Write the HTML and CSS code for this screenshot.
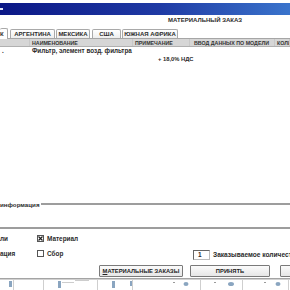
FILE: index.html
```html
<!DOCTYPE html>
<html lang="ru">
<head>
    <meta charset="UTF-8">
    <meta name="viewport" content="width=device-width, initial-scale=1.0">
    <title>Материальный заказ</title>
    <link rel="stylesheet" href="styles.css">
</head>
<body>
    <div class="window">
        <!-- Barra de título -->
        <div class="titlebar"><span class="sysicon"></span></div>
        <div class="caption">МАТЕРИАЛЬНЫЙ ЗАКАЗ</div>

        <!-- Pestañas de país -->
        <div class="tabs">
            <div class="tab active t0">К</div>
            <div class="tab t1">АРГЕНТИНА</div>
            <div class="tab t2">МЕКСИКА</div>
            <div class="tab t3">США</div>
            <div class="tab t4">ЮЖНАЯ АФРИКА</div>
        </div>

        <!-- Tabla de materiales -->
        <div class="grid">
            <div class="grid-row head">
                <span class="c1"></span>
                <span class="c2">НАИМЕНОВАНИЕ</span>
                <span class="c3">ПРИМЕЧАНИЕ</span>
                <span class="c4">ВВОД ДАННЫХ ПО МОДЕЛИ</span>
                <span class="c5">КОЛИ</span>
            </div>
            <div class="grid-row item">
                <span class="c1">.</span>
                <span class="c2">Фильтр, элемент возд. фильтра</span>
                <span class="c3"></span>
                <span class="c4"></span>
                <span class="c5"></span>
            </div>
            <div class="grid-row item">
                <span class="c1"></span>
                <span class="c2"></span>
                <span class="c3 tax">+ 18,0% НДС</span>
                <span class="c4"></span>
                <span class="c5"></span>
            </div>
        </div>

        <div class="group">
            <div class="group-title"><span>информация</span></div>
        </div>

        <div class="options">
            <span class="opt-label">ли</span>
            <label class="check"><span class="box checked"><svg width="7" height="7" viewBox="0 0 7 7"><path d="M1.5 1.5 L5.5 5.5 M5.5 1.5 L1.5 5.5" stroke="#222" stroke-width="1.2"/></svg></span>Материал</label>
            <span></span>
            <span class="opt-label">ация</span>
            <label class="check"><span class="box"></span>Сбор</label>
            <div class="qty"><span class="qty-input">1</span><span class="qty-label">Заказываемое количест</span></div>
        </div>

        <div class="buttons">
            <button class="btn b1"><u>М</u>АТЕРИАЛЬНЫЕ ЗАКАЗЫ</button>
            <button class="btn b2">ПРИНЯТЬ</button>
            <button class="btn b3"></button>
        </div>

        <!-- Vista previa de diagramas -->
        <div class="preview">
            <svg width="290" height="13" viewBox="0 0 290 13">
                <rect x="0" y="0" width="290" height="1.5" fill="#a4a4a4"/>
                <g stroke="#cfcfcf" stroke-width="1">
                    <line x1="13.5" y1="2" x2="13.5" y2="13"/>
                    <line x1="43.5" y1="2" x2="43.5" y2="13"/>
                    <line x1="97.5" y1="2" x2="97.5" y2="13"/>
                    <line x1="132.5" y1="2" x2="132.5" y2="13"/>
                    <line x1="200.5" y1="2" x2="200.5" y2="13"/>
                    <line x1="242.5" y1="2" x2="242.5" y2="13"/>
                    <line x1="288.5" y1="2" x2="288.5" y2="13"/>
                </g>
                <g fill="#8aa5c0">
                    <rect x="9" y="3" width="3" height="6"/>
                    <rect x="58" y="3" width="3" height="7"/>
                    <rect x="112" y="3" width="3" height="7"/>
                    <rect x="130" y="3" width="2" height="5"/>
                    <ellipse cx="186" cy="6" rx="2.5" ry="2"/>
                    <ellipse cx="231" cy="6" rx="3" ry="2"/>
                    <ellipse cx="278" cy="6" rx="2.5" ry="2"/>
                </g>
                <g fill="#9a9a9a">
                    <rect x="173" y="4" width="2" height="1"/>
                    <rect x="214" y="4" width="2" height="1"/>
                    <rect x="264" y="4" width="2" height="1"/>
                    <rect x="62" y="4" width="12" height="0.5"/>
                    <rect x="75" y="2.5" width="14" height="0.5"/>
                </g>
            </svg>
        </div>
    </div>
</body>
</html>
```

FILE: styles.css
```css
* {
    box-sizing: border-box;
}
body {
    margin: 0;
    width: 290px;
    height: 290px;
    overflow: hidden;
    background: #fff;
    font-family: "Liberation Sans", Arial, sans-serif;
    font-size: 6px;
    font-weight: bold;
    color: #2b2b2b;
}
.window {
    display: flex;
    flex-direction: column;
    width: 290px;
    height: 290px;
    overflow: hidden;
}
.titlebar {
    margin-top: 3px;
    height: 12px;
    flex: none;
    display: flex;
    align-items: center;
    background: linear-gradient(to right, #0b1786, #1f3aa4 55%, #3a74cc); /* Azul clásico */
}
.sysicon {
    width: 3px;
    height: 2px;
    background: #dfe3f5;
}
.caption {
    height: 11px;
    flex: none;
    line-height: 11px;
    padding-left: 168px;
    white-space: nowrap;
}
.tabs {
    height: 13px;
    flex: none;
    display: flex;
    align-items: flex-end;
    gap: 1px;
    border-bottom: 1px solid #a6a6a6;
    white-space: nowrap;
}
.tab {
    height: 9px;
    line-height: 8px;
    text-align: center;
    border: 1px solid #a9a9a9;
    border-bottom: none;
    border-radius: 2px 2px 0 0;
    background: linear-gradient(#ffffff, #eeeeee);
}
.tab.active {
    height: 11px;
    line-height: 11px;
    background: #fff;
    border-left: none;
    text-align: left;
    margin-bottom: -1px;
}
.t0 { width: 8px; }
.t1 { width: 45px; margin-left: 1px; }
.t2 { width: 34px; }
.t3 { width: 29px; margin-left: 1px; }
.t4 { width: 56px; }

.grid {
    height: 160px;
    flex: none;
    background: #fff;
    overflow: hidden;
}
.grid-row {
    display: flex;
    white-space: nowrap;
    overflow: hidden;
}
.grid-row span {
    flex: none;
    overflow: hidden;
    padding-left: 2px;
}
.head {
    height: 8px;
    line-height: 8px;
    background: #d6d6d6;
    border-bottom: 1px solid #b0b0b0;
    font-size: 5.3px;
    color: #333;
}
.head span {
    border-right: 1px solid #c8c8c8;
}
.item {
    height: 8px;
    line-height: 8px;
    font-size: 6.3px;
}
.item:first-of-type {
    margin-top: 1px;
}
.c1 { width: 30px; }
.c2 { width: 103px; }
.c3 { width: 57px; }
.c4 { width: 85px; padding-left: 4px !important; }
.c5 { width: 15px; }
.tax {
    padding-left: 25px !important;
    overflow: visible !important;
    font-size: 5.8px;
}

.group {
    height: 30px;
    flex: none;
    border-bottom: 2px solid #9d9d9d;
}
.group-title {
    height: 10px;
    display: flex;
    align-items: center;
    font-size: 6.2px;
}
.group-title span {
    padding-right: 1px;
}
.group-title::after {
    content: "";
    flex: 1;
    height: 2px;
    background: #9d9d9d;
}

.options {
    display: grid;
    grid-template-columns: 37px 156px 97px;
    grid-auto-rows: 15px;
    align-items: center;
    margin-top: 2px;
    font-size: 6.4px;
    white-space: nowrap;
}
.check {
    display: flex;
    align-items: center;
    gap: 3px;
}
.box {
    width: 7px;
    height: 7px;
    border: 1px solid #555;
    background: #fff;
    display: flex;
}
.box svg {
    margin: -1px;
}
.qty {
    display: flex;
    align-items: center;
    gap: 3px;
    padding-top: 2px;
    overflow: hidden;
}
.qty-input {
    flex: none;
    width: 17px;
    height: 10px;
    line-height: 8px;
    padding-left: 4px;
    border: 1px solid #666;
    border-right-color: #bbb;
    border-bottom-color: #bbb;
    background: #fff;
}
.qty-label {
    font-size: 6.6px;
}

.buttons {
    display: flex;
    gap: 7px;
    padding-left: 99px;
    margin-top: 4px;
    height: 12px;
    flex: none;
    overflow: hidden;
}
.btn {
    flex: none;
    height: 12px;
    padding: 0;
    font-family: inherit;
    font-size: 5.8px;
    font-weight: bold;
    color: #222;
    border: 1px solid #7a7a7a;
    border-radius: 1px;
    background: linear-gradient(#fbfbfb, #e6e6e6);
    white-space: nowrap;
    overflow: hidden;
}
.b1 { width: 84px; }
.b2 { width: 80px; }
.b3 { width: 40px; margin-left: 3px; }

.preview {
    margin-top: 1px;
    height: 13px;
    flex: none;
    overflow: hidden;
}
.preview svg {
    display: block;
}
```
